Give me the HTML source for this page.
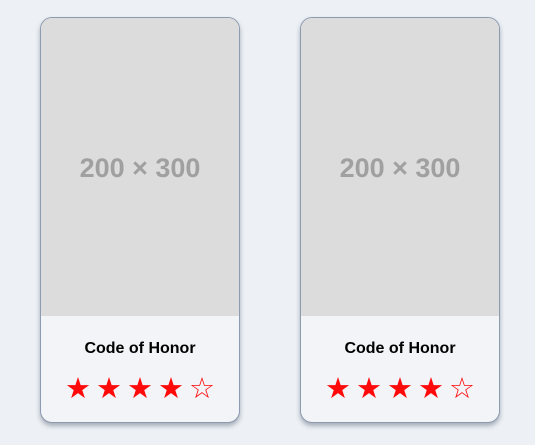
<!DOCTYPE html>
<html><head><style>
body{margin:0;background:#edf1f5;width:535px;height:445px;position:relative;font-family:"Liberation Sans",Arial,sans-serif;}
.card{position:absolute;top:17px;width:198px;height:404px;border:1px solid #8d9bb0;border-radius:12px;background:#f3f4f7;overflow:hidden;box-shadow:0 3px 5px rgba(80,90,110,0.45);}
.img{height:298px;background:#dcdcdc;display:flex;align-items:center;justify-content:center;color:#a0a0a0;font-size:27px;font-weight:bold;padding-top:2px;box-sizing:border-box;}
.t{text-align:center;font-weight:bold;font-size:16px;color:#000;margin-top:24px;}
.s{text-align:center;color:#ff0a0a;font-size:29px;margin-top:15px;letter-spacing:5px;padding-left:5px;line-height:30px;font-family:"DejaVu Sans",sans-serif;}
</style></head><body>
<div class="card" style="left:40px"><div class="img">200 × 300</div><div class="t">Code of Honor</div><div class="s">★★★★☆</div></div>
<div class="card" style="left:300px"><div class="img">200 × 300</div><div class="t">Code of Honor</div><div class="s">★★★★☆</div></div>
</body></html>
